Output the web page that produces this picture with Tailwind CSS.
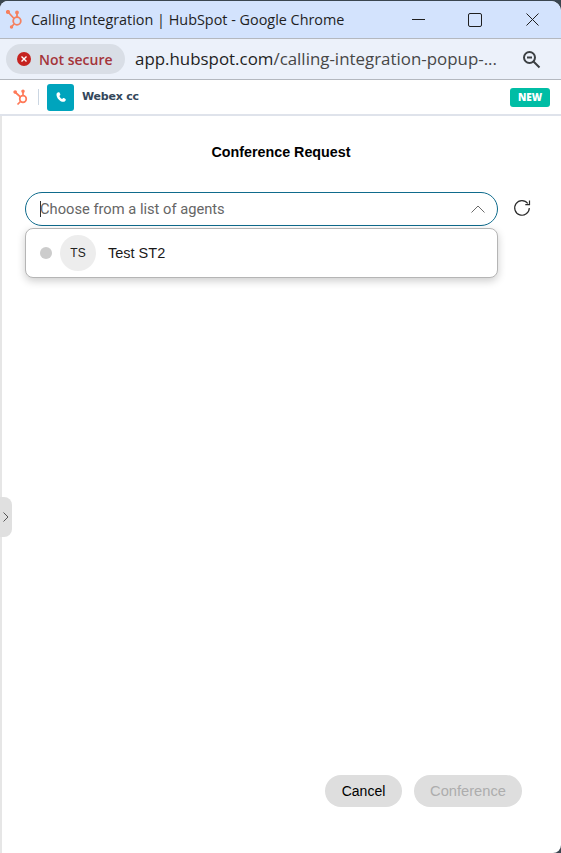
<!DOCTYPE html>
<html lang="en">
<head>
    <meta charset="UTF-8">
    <title>Calling Integration | HubSpot - Google Chrome</title>
    <script src="https://cdn.jsdelivr.net/npm/@tailwindcss/browser@4"></script>
</head>
<body class="bg-[#3a4650] w-[561px] h-[853px] overflow-hidden font-['Liberation_Sans',sans-serif]">
    <div class="relative flex flex-col w-[561px] h-[852px] mt-px rounded-tl-lg rounded-tr-[10px] rounded-br-lg overflow-hidden bg-white">

        <!-- title bar -->
        <div class="flex items-center h-[38px] shrink-0 bg-[#d3e3fd] border-b border-[#b4b8bf] font-['Open_Sans',sans-serif]">
            <svg class="ml-[6px] w-[20px] h-[20px]" viewBox="0 0 20 20" fill="none" stroke="#f5805f" stroke-width="1.800">
                <circle cx="11" cy="11" r="3.800"/>
                <path d="M11 7V3M8 8.500L2.500 2.500M8 14l-2.500 3"/>
                <circle cx="2" cy="2" r="1.200" fill="#f5805f"/>
                <circle cx="11" cy="2.500" r="1" fill="#f5805f"/>
                <circle cx="5.500" cy="17" r="0.800" fill="#f5805f"/>
            </svg>
            <span class="ml-[5px] text-[14.4px] text-[#1f1f1f]">Calling Integration | HubSpot - Google Chrome</span>
            <svg class="ml-auto w-[13px] h-[14px]" viewBox="0 0 13 14" stroke="#1f1f1f" stroke-width="1"><path d="M0 6.500h13"/></svg>
            <svg class="ml-[43px] w-[14px] h-[14px]" viewBox="0 0 14 14" fill="none" stroke="#1f1f1f" stroke-width="1"><rect x="0.500" y="0.500" width="13" height="13" rx="1.500"/></svg>
            <svg class="ml-[44px] mr-[22px] w-[13px] h-[13px]" viewBox="0 0 13 13" stroke="#1f1f1f" stroke-width="1"><path d="M0.500 0.500l12 12M12.500 0.500l-12 12"/></svg>
        </div>

        <!-- address bar -->
        <div class="flex items-center h-[41px] shrink-0 bg-[#ecf1fa] border-b border-[#b4b8bf] font-['Open_Sans',sans-serif]">
            <div class="flex items-center ml-[6px] w-[119px] h-[30px] rounded-full bg-[#d9dee6]">
                <div class="flex items-center justify-center ml-[11px] w-[14px] h-[14px] rounded-full bg-[#c5221f]">
                    <svg class="w-[6px] h-[6px]" viewBox="0 0 6 6" stroke="#fff" stroke-width="1.400"><path d="M0.500 0.500l5 5M5.500 0.500l-5 5"/></svg>
                </div>
                <span class="ml-[8px] text-[14px] font-semibold text-[#a4343a]">Not secure</span>
            </div>
            <span class="ml-[10px] text-[16.900px] text-[#1f1f1f] whitespace-nowrap">app.hubspot.com<span class="text-[#474747]">/calling-integration-popup-...</span></span>
            <svg class="ml-auto mr-[20px] w-[19px] h-[19px]" viewBox="0 0 19 19" fill="none" stroke="#3c4043" stroke-width="2">
                <circle cx="7.500" cy="7.500" r="5.500"/>
                <path d="M5 7.500h5M11.500 11.500l6 6"/>
            </svg>
        </div>

        <!-- app header -->
        <div class="flex items-center h-[36px] shrink-0 border-b-2 border-[#dfe3eb]">
            <svg class="ml-[13px] w-[16px] h-[17px]" viewBox="0 0 16 17" fill="none" stroke="#ff7a59" stroke-width="1.700">
                <circle cx="10" cy="10" r="3.300"/>
                <path d="M10 6.500V2.500M7.500 8L2.500 3.500M7.500 12.500L4.500 15.500"/>
                <circle cx="2.200" cy="3" r="1" fill="#ff7a59"/>
                <circle cx="10" cy="2.200" r="0.900" fill="#ff7a59"/>
            </svg>
            <div class="ml-[9px] w-px h-[16px] bg-[#cbd6e2]"></div>
            <div class="flex items-center justify-center ml-[8px] w-[27px] h-[27px] rounded-[3px] bg-[#00a4bd]">
                <svg class="w-[12px] h-[12px]" viewBox="0 0 24 24" fill="#fff"><path d="M6.600 2.500c.9-.5 1.800-.2 2.300.7l1.600 3c.4.8.3 1.600-.3 2.200l-1.500 1.400c.9 2.300 2.800 4.500 5.500 6l1.600-1.400c.7-.6 1.500-.6 2.300-.2l2.800 1.800c.8.6 1 1.500.5 2.400-1 1.900-2.600 3.100-4.600 3.100C9.500 21.500 2.500 13 3 6.300c.1-1.600 1.900-3.100 3.600-3.800z"/></svg>
            </div>
            <span class="ml-[8px] text-[11px] font-bold text-[#33475b] font-['DejaVu_Sans',sans-serif] tracking-[-0.2px]">Webex cc</span>
            <span class="ml-auto mr-[11px] flex items-center justify-center w-[40px] h-[19px] rounded-[3px] bg-[#00bda5] text-white text-[10px] font-extrabold font-['Open_Sans',sans-serif]">NEW</span>
        </div>

        <!-- main panel -->
        <div class="relative flex flex-col flex-1 border-l-2 border-[#e6e6e6]">
            <h1 class="mt-[26px] ml-[-1px] text-center text-[14.300px] font-bold text-black">Conference Request</h1>

            <div class="flex items-center mt-[29px] ml-[23px]">
                <div class="flex items-center w-[473px] h-[34px] rounded-full border border-[#0f6b8c] pl-[14px] pr-[12px]">
                    <span class="w-px h-[16px] bg-[#333]"></span>
                    <span class="-ml-px text-[14.700px] text-[#666] font-['Roboto',sans-serif]">Choose from a list of agents</span>
                    <svg class="ml-auto w-[14px] h-[8px]" viewBox="0 0 14 8" fill="none" stroke="#6b6b6b" stroke-width="1"><path d="M0.500 7.500L7 1l6.500 6.500"/></svg>
                </div>
                <svg class="ml-[15px] -mt-[2px] w-[18px] h-[18px]" viewBox="0 0 18 18" fill="none" stroke="#2b2b2b" stroke-width="1.200">
                    <path d="M14.800 4.500A7.300 7.300 0 1 0 16.300 9"/>
                    <path d="M16.500 1.500v4.200h-4.200"/>
                </svg>
            </div>

            <!-- dropdown -->
            <div class="flex items-center mt-[2px] ml-[23px] w-[473px] h-[50px] rounded-lg border border-[#b5b5b5] bg-white shadow-[0_3px_8px_rgba(0,0,0,0.2)]">
                <span class="ml-[14px] w-[12px] h-[12px] rounded-full bg-[#cccccc]"></span>
                <span class="flex items-center justify-center ml-[8px] w-[36px] h-[36px] rounded-full bg-[#ededed] text-[12px] text-[#222]">TS</span>
                <span class="ml-[12px] text-[14.500px] text-[#1a1a1a]">Test ST2</span>
            </div>

            <!-- footer buttons -->
            <div class="flex justify-end gap-[12px] mt-auto mb-[46px] mr-[39px]">
                <button class="w-[77px] h-[32px] rounded-full bg-[#dedede] text-[14px] text-black">Cancel</button>
                <button class="w-[108px] h-[32px] rounded-full bg-[#dedede] text-[14.700px] text-[#adadad]">Conference</button>
            </div>

            <!-- side handle -->
            <div class="absolute left-[-2px] top-[381px] flex items-center justify-center w-[12px] h-[40px] rounded-r-lg bg-[#e0e0e0]">
                <svg class="w-[6px] h-[10px]" viewBox="0 0 6 10" fill="none" stroke="#555" stroke-width="1"><path d="M0.500 0.500L5 5l-4.500 4.500"/></svg>
            </div>
        </div>
    </div>
</body>
</html>
